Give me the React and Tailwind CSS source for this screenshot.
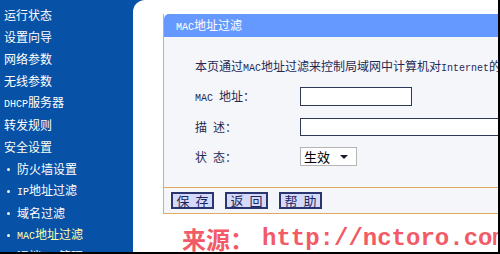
const menu = [
  { label: '运行状态' },
  { label: '设置向导' },
  { label: '网络参数' },
  { label: '无线参数' },
  { label: 'DHCP服务器', ascii: 'DHCP', rest: '服务器' },
  { label: '转发规则' },
  { label: '安全设置', parent: true },
  { label: '防火墙设置', sub: true },
  { label: 'IP地址过滤', sub: true, ascii: 'IP', rest: '地址过滤' },
  { label: '域名过滤', sub: true },
  { label: 'MAC地址过滤', sub: true, active: true, ascii: 'MAC', rest: '地址过滤' },
  { label: '远端WEB管理', sub: true, pre: '远端', ascii: 'WEB', rest: '管理' },
]

const cjk = '[font-family:"Noto_Sans_CJK_SC",sans-serif]'

function Ascii({ children }) {
  return <span className='[font-family:"Liberation_Mono",monospace] text-[10px]'>{children}</span>
}

function MenuText({ item }) {
  if (!item.ascii) return item.label
  return (
    <>
      {item.pre}
      <Ascii>{item.ascii}</Ascii>
      {item.rest}
    </>
  )
}

function Sidebar() {
  return (
    <div className={`w-[133px] shrink-0 bg-[#0751a6] pt-[4px] text-[12px] leading-[22px] ${cjk}`}>
      {menu.map((item) => (
        <div
          key={item.label}
          className={`flex h-[22px] items-center whitespace-nowrap ${item.sub ? 'pl-[7px]' : 'pl-[4px]'} ${
            item.active ? 'text-[#ffffa8]' : item.parent ? 'text-[#fffff0]' : 'text-white'
          }`}
        >
          {item.sub && <span className="mr-[7px] h-[3px] w-[3px] rounded-full bg-[#f4f4e8]" />}
          <span>
            <MenuText item={item} />
          </span>
        </div>
      ))}
    </div>
  )
}

function Label({ children }) {
  return (
    <div className="flex w-[105px] shrink-0 items-baseline whitespace-nowrap text-[12px] text-[#1f2a55]">
      {children}
    </div>
  )
}

// two-character label with a gap, e.g. 描 述：
function Pair({ a, b }) {
  return (
    <Label>
      <span className="mr-[6px]">{a}</span>
      <span>{b}：</span>
    </Label>
  )
}

function Button({ a, b, last }) {
  return (
    <button
      className={`flex h-[17px] w-[43px] items-center justify-center whitespace-nowrap border-2 border-[#2a3670] bg-[#d6dafa] text-[13px] leading-none text-[#1c2660] ${
        last ? '' : 'mr-[11px]'
      }`}
    >
      <span className="mr-[6px]">{a}</span>
      <span>{b}</span>
    </button>
  )
}

function Panel() {
  return (
    <div className="w-[370px] border-b border-l border-[#e2aa5e]">
      <div className="flex h-[23px] items-center rounded-tl-[5px] bg-[#6699ff] pl-[12px] text-[12px] text-white">
        <span>
          <Ascii>MAC</Ascii>地址过滤
        </span>
      </div>
      <div className="bg-[#f5f6fa] pb-[21px] pl-[31px] pt-[19px]">
        <div className="flex h-[20px] items-center whitespace-nowrap text-[12px] text-[#1f2a55]">
          <span>
            本页通过<Ascii>MAC</Ascii>地址过滤来控制局域网中计算机对<Ascii>Internet</Ascii>的访问。
          </span>
        </div>
        <div className="mt-[11px] flex h-[19px] items-center">
          <Label>
            <Ascii>MAC</Ascii>
            <span className="ml-[6px]">地址：</span>
          </Label>
          <div className="h-[19px] w-[112px] border border-[#2d3957] bg-white" />
        </div>
        <div className="mt-[12px] flex h-[18px] items-center">
          <Pair a="描" b="述" />
          <div className="h-[18px] w-[260px] border border-[#2d3957] bg-white" />
        </div>
        <div className="mt-[11px] flex h-[19px] items-center">
          <Pair a="状" b="态" />
          <div className="flex h-[19px] w-[57px] items-center justify-between border border-[#b4b4b4] bg-white pl-[3px] pr-[8px]">
            <span className="text-[13px] leading-none text-black">生效</span>
            <span className="h-0 w-0 border-x-[4px] border-t-[4px] border-x-transparent border-t-[#1a1a2a]" />
          </div>
        </div>
      </div>
      <div className="flex h-[26px] items-start border-t border-[#e2aa5e] bg-[#f5f6fa] pl-[7px] pt-[4px]">
        <Button a="保" b="存" />
        <Button a="返" b="回" />
        <Button a="帮" b="助" last />
      </div>
    </div>
  )
}

export default function App() {
  return (
    <div className={`box-border flex h-[254px] w-[500px] overflow-hidden border-b-2 border-r-2 border-black bg-[#0751a6] ${cjk}`}>
      <Sidebar />
      <div className="min-w-0 flex-1 overflow-hidden rounded-tl-[12px] bg-white pl-[30px] pt-[14px]">
        <Panel />
        <div className="mt-[12px] flex h-[26px] items-center whitespace-nowrap pl-[19px] text-[#f25a66]">
          <span className="text-[24px] font-bold leading-none">来源：</span>
          <span className='ml-[8px] [font-family:"Liberation_Mono",monospace] text-[24px] font-bold leading-none'>
            http://nctoro.com
          </span>
        </div>
      </div>
    </div>
  )
}
